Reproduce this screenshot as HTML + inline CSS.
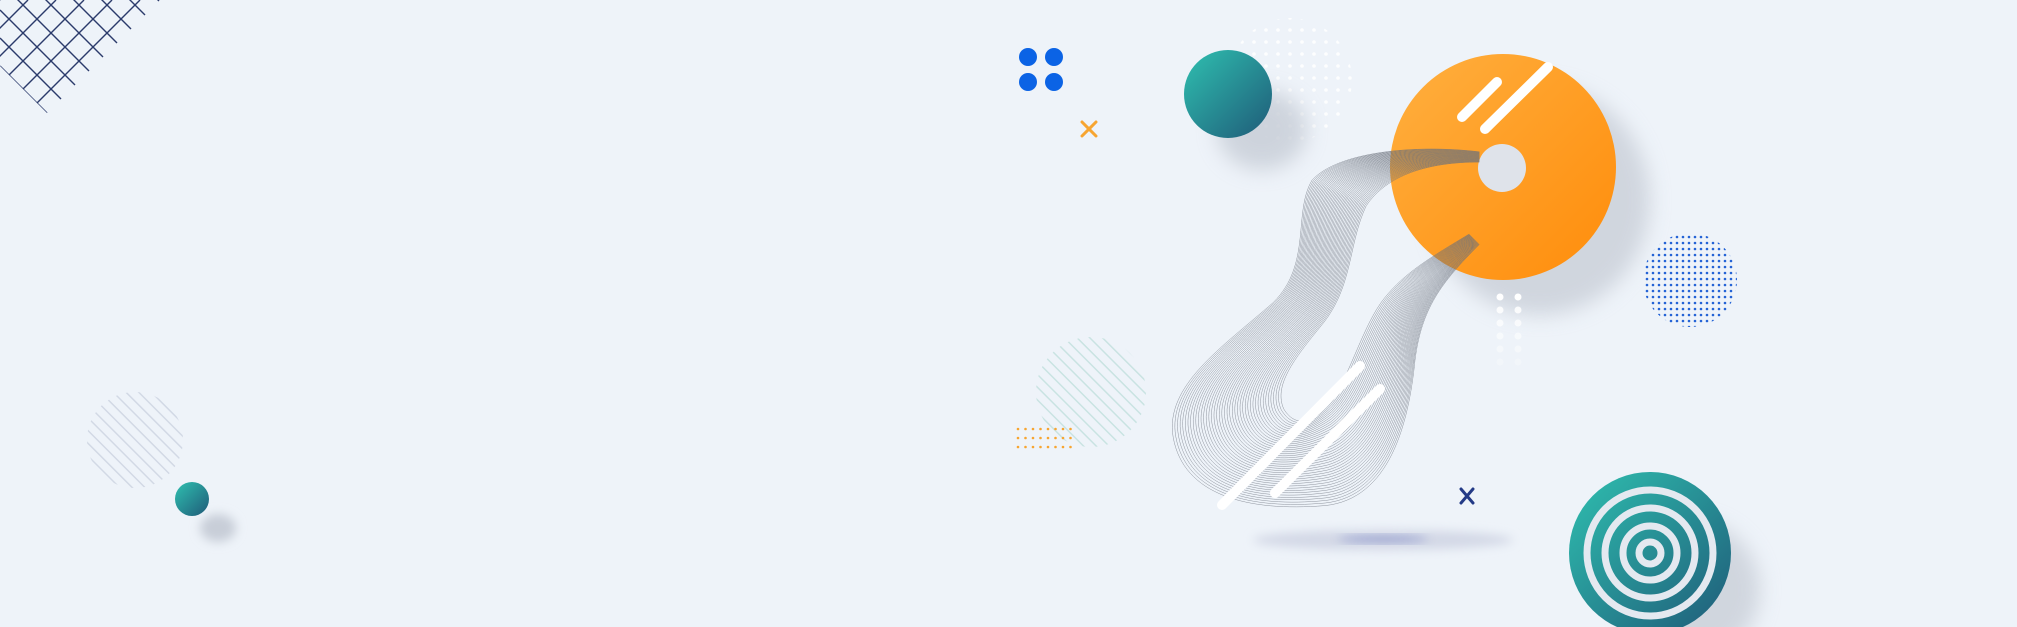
<!DOCTYPE html>
<html><head><meta charset="utf-8"><style>
html,body{margin:0;padding:0;width:2017px;height:627px;overflow:hidden;background:#eef3f9;}
svg{display:block;position:absolute;left:0;top:0}
</style></head><body>
<svg id="s" width="2017" height="627" viewBox="0 0 2017 627" xmlns="http://www.w3.org/2000/svg">
<defs>
<linearGradient id="teal" x1="0" y1="0" x2="1" y2="1"><stop offset="0" stop-color="#2fc0b0"/><stop offset="1" stop-color="#1f5a78"/></linearGradient>
<linearGradient id="org" x1="0" y1="0" x2="1" y2="1"><stop offset="0" stop-color="#ffb040"/><stop offset="1" stop-color="#ff8c0a"/></linearGradient>
<filter id="bl" x="-50%" y="-50%" width="200%" height="200%"><feGaussianBlur stdDeviation="10"/></filter>
<filter id="bl2" x="-50%" y="-50%" width="200%" height="200%"><feGaussianBlur stdDeviation="5"/></filter>
<clipPath id="gc"><polygon points="0,0 160,0 47,113 0,66"/></clipPath>
<clipPath id="hc1"><circle cx="135" cy="440" r="48"/></clipPath>
<clipPath id="hc2"><circle cx="1091" cy="392" r="55"/></clipPath>
<clipPath id="bc"><circle cx="1690" cy="280" r="47"/></clipPath>
<pattern id="hatch" width="9" height="9" patternUnits="userSpaceOnUse" patternTransform="rotate(-45)"><rect width="1.5" height="9" fill="#d2d9e5"/></pattern>
<pattern id="hatch2" width="9" height="9" patternUnits="userSpaceOnUse" patternTransform="rotate(-45)"><rect width="1.5" height="9" fill="#c9e3e2"/></pattern>
<pattern id="bdots" width="6" height="6" patternUnits="userSpaceOnUse"><circle cx="3" cy="3" r="1.3" fill="#2463d6"/></pattern>
<pattern id="wdots" width="12" height="12" patternUnits="userSpaceOnUse"><circle cx="6" cy="6" r="1.8" fill="#ffffff"/></pattern>
</defs>
<g clip-path="url(#gc)" stroke="#2b3b6b" stroke-width="1.4" id="grid"></g>
<rect x="80" y="390" width="110" height="110" fill="url(#hatch)" clip-path="url(#hc1)"/>
<ellipse cx="218" cy="528" rx="18" ry="14" fill="#c8ced8" filter="url(#bl2)"/>
<circle cx="192" cy="499" r="17" fill="url(#teal)"/>
<g fill="#0b63e5"><circle cx="1028" cy="57" r="9"/><circle cx="1054" cy="57" r="9"/><circle cx="1028" cy="82" r="9"/><circle cx="1054" cy="82" r="9"/></g>
<g stroke="#f7a531" stroke-width="3" stroke-linecap="round"><line x1="1082" y1="122" x2="1096" y2="136"/><line x1="1096" y1="122" x2="1082" y2="136"/></g>
<circle cx="1290" cy="80" r="62" fill="url(#wdots)" opacity="0.9"/>
<ellipse cx="1262" cy="130" rx="45" ry="40" fill="#c6ccd6" filter="url(#bl)" opacity="0.8"/>
<circle cx="1228" cy="94" r="44" fill="url(#teal)"/>
<rect x="1030" y="330" width="130" height="130" fill="url(#hatch2)" clip-path="url(#hc2)"/>
<g id="odots" fill="#f7a531"></g>
<ellipse cx="1540" cy="200" rx="110" ry="115" fill="#c9cfd8" filter="url(#bl)" opacity="0.8"/>
<circle cx="1503" cy="167" r="113" fill="url(#org)"/>
<circle cx="1502" cy="168" r="24" fill="#dfe3ea"/>
<g id="wave" fill="none" stroke="#6b717c" stroke-width="0.5" opacity="0.75"></g>
<g stroke="#fff" stroke-width="10" stroke-linecap="round">
<line x1="1497" y1="82" x2="1462" y2="117"/><line x1="1548" y1="67" x2="1485" y2="129"/>
<line x1="1222" y1="505" x2="1360" y2="366"/><line x1="1275" y1="493" x2="1380" y2="389"/>
</g>
<g fill="#fff" id="wcol"></g>
<rect x="1640" y="230" width="100" height="100" fill="url(#bdots)" clip-path="url(#bc)"/>
<g stroke="#233a86" stroke-width="3" stroke-linecap="round"><line x1="1461" y1="489" x2="1473" y2="503"/><line x1="1473" y1="489" x2="1461" y2="503"/></g>
<ellipse cx="1383" cy="540" rx="130" ry="10" fill="#d3d8e6" filter="url(#bl2)"/>
<ellipse cx="1383" cy="539" rx="45" ry="3" fill="#7b86c4" filter="url(#bl2)" opacity="0.8"/>
<ellipse cx="1690" cy="590" rx="70" ry="70" fill="#c9cfd8" filter="url(#bl)" opacity="0.8"/>
<circle cx="1650" cy="553" r="81" fill="url(#teal)"/>
<g fill="none" stroke="#e4e9f0" stroke-width="7">
<circle cx="1650" cy="553" r="63"/><circle cx="1650" cy="553" r="45"/><circle cx="1650" cy="553" r="27"/><circle cx="1650" cy="553" r="11"/>
</g>
</svg>
<script>
var NS="http://www.w3.org/2000/svg";
function el(t,a,p){var e=document.createElementNS(NS,t);for(var k in a)e.setAttribute(k,a[k]);p.appendChild(e);return e;}
var g=document.getElementById("grid");
for(var c=0;c<=400;c+=28){el("line",{x1:c,y1:0,x2:c-300,y2:300},g);}
for(var d=66;d>=-250;d-=28){el("line",{x1:0,y1:d,x2:300,y2:d+300},g);}
var o=document.getElementById("odots");
for(var i=0;i<8;i++)for(var j=0;j<3;j++)el("circle",{cx:1018+i*7.5,cy:429+j*9,r:1.3},o);
var w=document.getElementById("wcol");
for(var j=0;j<6;j++){el("circle",{cx:1500,cy:297+j*13,r:3.5,opacity:1-j*0.15},w);el("circle",{cx:1518,cy:297+j*13,r:3.5,opacity:1-j*0.15},w);}
var outer=[1150,118, 1100,112,1040,118,1020,140, 1005,165,1020,205,990,235, 950,270,905,300,912,340, 920,385,970,398,1030,393, 1080,388,1095,330,1100,280, 1105,240,1120,220,1150,190];
var inner=[1150,126, 1110,126,1078,136,1062,160, 1048,190,1052,222,1028,252, 1005,280,990,300,998,318, 1008,334,1022,328,1036,310, 1050,290,1060,252,1076,232, 1092,212,1112,200,1142,182];
var S=1.2864;
var wv=document.getElementById("wave");
var N=42;
for(var k=0;k<=N;k++){var t=k/N,p=[];for(var m=0;m<outer.length;m++)p.push(((outer[m]*(1-t)+inner[m]*t)*S).toFixed(1));
var d="M"+p[0]+","+p[1];for(var s=2;s<p.length;s+=6)d+=" C"+p[s]+","+p[s+1]+" "+p[s+2]+","+p[s+3]+" "+p[s+4]+","+p[s+5];
el("path",{d:d},wv);}
</script>
</body></html>
